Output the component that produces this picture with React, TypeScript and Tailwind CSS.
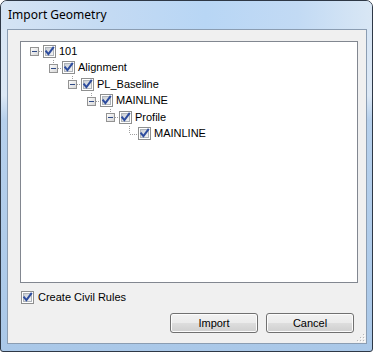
import React from "react";

const CheckBox = () => (
  <svg width="13" height="13" viewBox="0 0 13 13" className="shrink-0 block">
    <defs>
      <linearGradient id="cbg" x1="0" y1="0" x2="1" y2="1">
        <stop offset="0" stopColor="#c6cbd2" />
        <stop offset="1" stopColor="#f7f7f7" />
      </linearGradient>
    </defs>
    <rect x="0.5" y="0.5" width="12" height="12" fill="#ffffff" stroke="#8e8f8f" />
    <rect x="2.5" y="2.5" width="8" height="8" fill="url(#cbg)" stroke="#aeb3b9" />
    <path d="M3.2 6.4 L5.4 9.2 L10.2 2.6" fill="none" stroke="#2d4c9e" strokeWidth="2" strokeLinecap="square" />
  </svg>
);

const ExpandBox = () => (
  <svg width="9" height="9" viewBox="0 0 9 9" className="block">
    <defs>
      <linearGradient id="ebg" x1="0" y1="0" x2="1" y2="1">
        <stop offset="0" stopColor="#ffffff" />
        <stop offset="1" stopColor="#d4d4d4" />
      </linearGradient>
    </defs>
    <rect x="0.5" y="0.5" width="8" height="8" fill="url(#ebg)" stroke="#939393" />
    <line x1="2" y1="4.5" x2="7" y2="4.5" stroke="#2f4a86" />
  </svg>
);

type Node = { label: string; level: number; leaf?: boolean };

const nodes: Node[] = [
  { label: "101", level: 0 },
  { label: "Alignment", level: 1 },
  { label: "PL_Baseline", level: 2 },
  { label: "MAINLINE", level: 3 },
  { label: "Profile", level: 4 },
  { label: "MAINLINE", level: 5, leaf: true },
];

const Row = ({ n }: { n: Node }) => (
  <div className="flex items-center h-[16.5px]" style={{ paddingLeft: n.level * 19 }}>
    <div className="relative w-[22px] h-full shrink-0">
      <svg width="22" height="17" viewBox="0 0 22 17" className="absolute left-0 top-0">
        {n.level > 0 && !n.leaf && (
          <line x1="13.5" y1="0" x2="13.5" y2="4" stroke="#a0a0a0" strokeDasharray="1 1" />
        )}
        {n.leaf ? (
          <>
            <line x1="13.5" y1="0" x2="13.5" y2="8" stroke="#a0a0a0" strokeDasharray="1 1" />
            <line x1="14" y1="8.5" x2="22" y2="8.5" stroke="#a0a0a0" strokeDasharray="1 1" />
          </>
        ) : (
          <line x1="18" y1="8.5" x2="22" y2="8.5" stroke="#a0a0a0" strokeDasharray="1 1" />
        )}
      </svg>
      {!n.leaf && (
        <div className="absolute left-[9px] top-[4px]">
          <ExpandBox />
        </div>
      )}
    </div>
    <CheckBox />
    <span className="ml-[3px] text-[11px] leading-none text-black">{n.label}</span>
  </div>
);

const Button = ({ children }: { children: React.ReactNode }) => (
  <div className="w-[88px] h-[20px] rounded-[3px] border border-[#707070] bg-[linear-gradient(180deg,#f2f2f2_0%,#ebebeb_48%,#dddddd_52%,#cfcfcf_100%)] shadow-[inset_0_0_0_1px_#fcfcfc] flex items-center justify-center text-[11px] text-black">
    {children}
  </div>
);

export default function App() {
  return (
    <div
      className="w-[373px] h-[352px] overflow-hidden"
      style={{ fontFamily: '"Liberation Sans", Arial, sans-serif' }}
    >
      <div className="w-[373px] h-[352px] rounded-t-[7px] rounded-b-[3px] border border-[#2e3846] bg-[linear-gradient(180deg,#d6e5f5_0%,#dce8f5_27%,#b6d0ec_34%,#aac8e8_100%)] flex flex-col">
        <div className="h-[28px] shrink-0 rounded-t-[6px] bg-[linear-gradient(90deg,#d5e4f4_0%,#c3daf3_30%,#b8d6f5_55%,#c2daf4_80%,#d9e7f5_100%)] flex items-center pl-[7px] pb-[1px]">
          <span className="text-[12px] text-black" style={{ fontFamily: '"Noto Sans", "Open Sans", sans-serif' }}>
            Import Geometry
          </span>
        </div>
        <div className="ml-[6px] mr-[5px] h-[315px] border border-[#8b9db2] bg-[#f0f0f0] flex flex-col pl-[12px] pt-[11px] relative">
          <div className="w-[338px] h-[242px] border border-[#828790] bg-white pt-[1px]">
            {nodes.map((n, i) => (
              <Row key={i} n={n} />
            ))}
          </div>
          <div className="mt-[8px] flex items-center h-[13px] pl-[1px]">
            <CheckBox />
            <span className="ml-[4px] text-[11px] leading-none text-black">Create Civil Rules</span>
          </div>
          <div className="mt-[9px] ml-[150px] flex gap-[8px]">
            <Button>Import</Button>
            <Button>Cancel</Button>
          </div>
          <svg width="10" height="10" viewBox="0 0 10 10" className="absolute right-[1px] bottom-[1px]">
            {[
              [8, 2], [5, 5], [8, 5], [2, 8], [5, 8], [8, 8],
            ].map(([x, y], i) => (
              <g key={i}>
                <rect x={x} y={y} width="1" height="1" fill="#b8b8b8" />
                <rect x={x + 1} y={y + 1} width="1" height="1" fill="#ffffff" />
              </g>
            ))}
          </svg>
        </div>
      </div>
    </div>
  );
}
